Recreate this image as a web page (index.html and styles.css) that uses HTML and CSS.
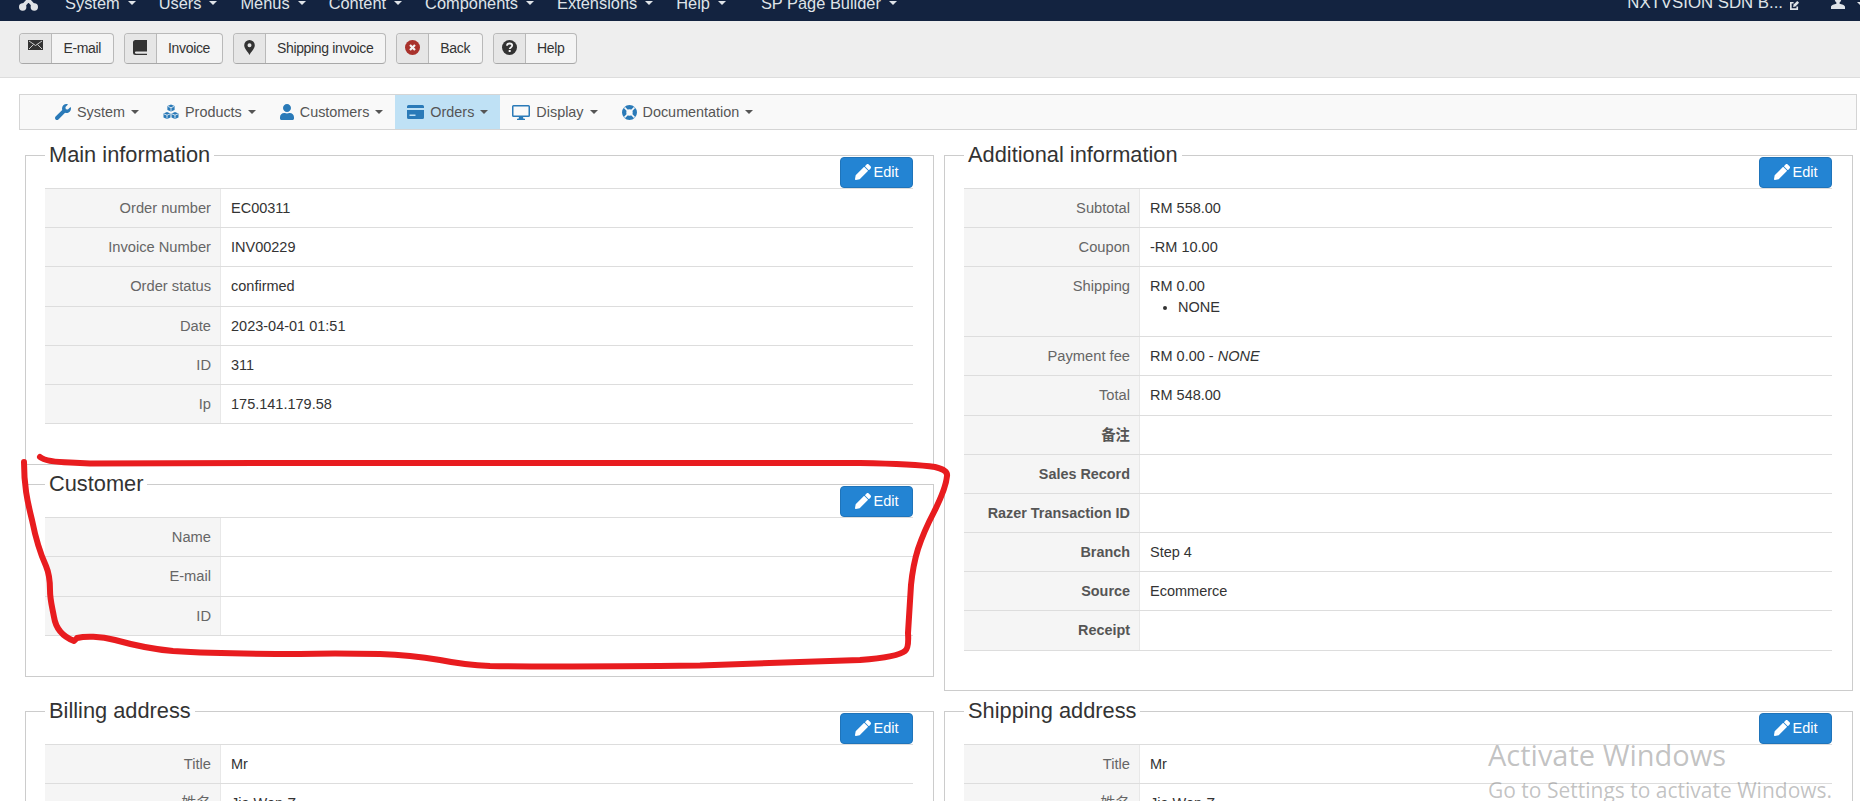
FILE: index.html
```html
<!DOCTYPE html>
<html lang="en">
<head>
<meta charset="utf-8">
<title>Order EC00311</title>
<link rel="stylesheet" href="styles.css">
</head>
<body>
<header class="topnav">
  <svg class="joomla" viewBox="0 0 19 21"><path d="M4 4 L15 16 M15 4 L4 16" stroke="#dfe2e6" stroke-width="3.600" stroke-linecap="round"/><circle cx="3.500" cy="3.500" r="3.200" fill="#dfe2e6"/><circle cx="15.500" cy="3.500" r="3.200" fill="#dfe2e6"/><circle cx="3.700" cy="17" r="3.700" fill="#dfe2e6"/><circle cx="15.300" cy="17" r="3.700" fill="#dfe2e6"/></svg>
  <nav class="topnav-list">
    <span class="topnav-item">System<i class="caret"></i></span>
    <span class="topnav-item">Users<i class="caret"></i></span>
    <span class="topnav-item">Menus<i class="caret"></i></span>
    <span class="topnav-item">Content<i class="caret"></i></span>
    <span class="topnav-item">Components<i class="caret"></i></span>
    <span class="topnav-item">Extensions<i class="caret"></i></span>
    <span class="topnav-item">Help<i class="caret"></i></span>
    <span class="topnav-item topnav-item-sp">SP Page Builder<i class="caret"></i></span>
  </nav>
  <div class="topnav-right">
    <span>NXTVSION SDN B...</span>
    <svg class="ext" viewBox="0 0 12 12"><path d="M9 7v3H2V3h3" fill="none" stroke="#dfe3e8" stroke-width="1.800"/><path d="M4.500 7.500 L5 5 L9 1 L11 3 L7 7 Z" fill="#dfe3e8"/></svg>
    <svg class="usr" viewBox="0 0 14 14"><path d="M7 0c2.200 0 3.400 1.600 3.400 3.800 0 1.600-.8 3-1.800 3.800v1.200c2 .6 5.400 1.200 5.400 3.200v2H0v-2c0-2 3.400-2.600 5.400-3.200V7.600C4.400 6.800 3.600 5.400 3.600 3.800 3.600 1.600 4.800 0 7 0z" fill="#dfe3e8"/></svg>
    <i class="caret caret-last"></i>
  </div>
</header>

<div class="toolbar">
  <a class="tbtn"><span class="tbtn-icon"><svg width="15" height="10" viewBox="0 0 15 10"><rect width="15" height="10" fill="#333"/><path d="M1 1 L7.500 5.500 L14 1 M1 9 L5.500 4.500 M14 9 L9.500 4.500" fill="none" stroke="#ddd" stroke-width=".9"/></svg></span><span class="tbtn-text">E-mail</span></a>
  <a class="tbtn"><span class="tbtn-icon"><svg width="14" height="15" viewBox="0 0 14 15"><path d="M2.500 0H14v11.500H3a1 1 0 0 0 0 2.200h11V15H2.500A2.500 2.500 0 0 1 0 12.500v-10A2.500 2.500 0 0 1 2.500 0z" fill="#333"/></svg></span><span class="tbtn-text">Invoice</span></a>
  <a class="tbtn"><span class="tbtn-icon"><svg width="11" height="15" viewBox="0 0 11 15"><path d="M5.500 0a5.300 5.300 0 0 1 5.300 5.300C10.800 8.500 7 12 5.500 15 4 12 .2 8.500.2 5.300A5.300 5.300 0 0 1 5.500 0zm0 3.300a2 2 0 1 0 0 4 2 2 0 0 0 0-4z" fill="#333" fill-rule="evenodd"/></svg></span><span class="tbtn-text">Shipping invoice</span></a>
  <a class="tbtn"><span class="tbtn-icon"><svg width="15" height="15" viewBox="0 0 15 15"><circle cx="7.500" cy="7.500" r="7.500" fill="#a9322c"/><path d="M5 5 L10 10 M10 5 L5 10" stroke="#f3f3f3" stroke-width="2.200"/></svg></span><span class="tbtn-text">Back</span></a>
  <a class="tbtn"><span class="tbtn-icon"><svg width="15" height="15" viewBox="0 0 15 15"><circle cx="7.500" cy="7.500" r="7.500" fill="#333"/><path d="M5 5.800C5 4.200 6.200 3.500 7.600 3.500S10.200 4.300 10.200 5.600C10.200 7.400 7.700 7.400 7.700 9" fill="none" stroke="#f3f3f3" stroke-width="1.800"/><rect x="6.700" y="10" width="2" height="2" fill="#f3f3f3"/></svg></span><span class="tbtn-text">Help</span></a>
</div>

<main class="page">
  <nav class="submenu">
    <a class="sub-item"><svg class="i16" viewBox="0 0 512 512"><path d="M507.730 109.100c-2.240-9.030-13.540-12.090-20.120-5.510l-74.360 74.360-67.880-11.310-11.310-67.880 74.360-74.360c6.620-6.620 3.430-17.900-5.660-20.160-47.380-11.740-99.550.91-136.580 37.930-39.640 39.640-50.550 97.100-34.050 147.200L18.740 402.760c-24.990 24.990-24.990 65.510 0 90.500 24.990 24.990 65.510 24.990 90.500 0l213.210-213.210c50.120 16.710 107.470 5.680 147.370-34.220 37.070-37.070 49.700-89.320 37.910-136.730z"/></svg>System<i class="caret caret-dark"></i></a>
    <a class="sub-item"><svg class="i16" viewBox="0 0 16 15"><path d="M8 0l3.600 1.500v4L8 7 4.400 5.500v-4zM4 7.500l3.500 1.500v4L4 14.500.5 13V9zM12 7.500L15.500 9v4L12 14.500 8.500 13V9z"/><path d="M4.800 1.900L8 3.200l3.200-1.300M8 3.200V6.500M.9 9.400L4 10.700l3.100-1.300M4 10.700V14M8.900 9.400L12 10.700l3.100-1.300M12 10.700V14" fill="none" stroke="#f9f9f9" stroke-width=".8"/></svg>Products<i class="caret caret-dark"></i></a>
    <a class="sub-item"><svg class="i14" viewBox="0 0 448 512"><path d="M224 256c70.700 0 128-57.300 128-128S294.700 0 224 0 96 57.300 96 128s57.300 128 128 128zm89.600 32h-16.700c-22.200 10.200-46.900 16-72.900 16s-50.600-5.800-72.900-16h-16.700C60.200 288 0 348.200 0 422.400V464c0 26.500 21.500 48 48 48h352c26.500 0 48-21.500 48-48v-41.600c0-74.200-60.200-134.400-134.400-134.400z"/></svg>Customers<i class="caret caret-dark"></i></a>
    <a class="sub-item sub-item-active"><svg class="i17" viewBox="0 0 17 14"><path d="M1.500 0h14A1.500 1.500 0 0 1 17 1.500V3H0V1.500A1.500 1.500 0 0 1 1.500 0zM0 5h17v7.500a1.500 1.500 0 0 1-1.500 1.500h-14A1.500 1.500 0 0 1 0 12.500zm2.500 4.500V11h6V9.500z" fill-rule="evenodd"/></svg>Orders<i class="caret caret-dark"></i></a>
    <a class="sub-item"><svg class="i18" viewBox="0 0 18 15"><path d="M1.500 0h15A1.500 1.500 0 0 1 18 1.500v9a1.500 1.500 0 0 1-1.500 1.500H11l.5 1.800h1.500V15H5v-1.200h1.500L7 12H1.500A1.500 1.500 0 0 1 0 10.500v-9A1.500 1.500 0 0 1 1.500 0zm0 1.500v9h15v-9z" fill-rule="evenodd"/></svg>Display<i class="caret caret-dark"></i></a>
    <a class="sub-item"><svg class="i15" viewBox="0 0 15 15"><path d="M7.500 0a7.500 7.500 0 1 1 0 15 7.500 7.500 0 0 1 0-15zm0 4.300a3.200 3.200 0 1 0 0 6.400 3.200 3.200 0 0 0 0-6.400z" fill-rule="evenodd"/><path d="M2.500 2.500L5.300 5.300M12.500 2.500L9.700 5.300M2.500 12.500L5.300 9.700M12.500 12.500L9.700 9.700" stroke="#f9f9f9" stroke-width="1.700"/></svg>Documentation<i class="caret caret-dark"></i></a>
  </nav>

  <div class="columns">
    <div class="stack">
      <fieldset class="box">
        <legend>Main information</legend>
        <div class="box-actions"><a class="edit"><svg class="pencil" viewBox="0 0 512 512"><path d="M497.900 142.100l-46.100 46.100c-4.700 4.700-12.300 4.700-17 0l-111-111c-4.700-4.700-4.700-12.300 0-17l46.100-46.100c18.700-18.700 49.100-18.700 67.900 0l60.100 60.100c18.800 18.700 18.800 49.100 0 67.900zM284.200 99.800L21.600 362.400.4 483.900c-2.900 16.400 11.400 30.600 27.800 27.800l121.500-21.300 262.600-262.600c4.700-4.700 4.700-12.300 0-17l-111-111c-4.800-4.700-12.400-4.700-17.100 0z"/></svg>Edit</a></div>
        <div class="rows">
          <div class="row"><div class="key">Order number</div><div class="val">EC00311</div></div>
          <div class="row"><div class="key">Invoice Number</div><div class="val">INV00229</div></div>
          <div class="row"><div class="key">Order status</div><div class="val">confirmed</div></div>
          <div class="row"><div class="key">Date</div><div class="val">2023-04-01 01:51</div></div>
          <div class="row"><div class="key">ID</div><div class="val">311</div></div>
          <div class="row"><div class="key">Ip</div><div class="val">175.141.179.58</div></div>
        </div>
      </fieldset>
      <fieldset class="box">
        <legend>Customer</legend>
        <div class="box-actions"><a class="edit"><svg class="pencil" viewBox="0 0 512 512"><path d="M497.900 142.100l-46.100 46.100c-4.700 4.700-12.300 4.700-17 0l-111-111c-4.700-4.700-4.700-12.300 0-17l46.100-46.100c18.700-18.700 49.100-18.700 67.900 0l60.100 60.100c18.800 18.700 18.800 49.100 0 67.900zM284.200 99.800L21.600 362.400.4 483.900c-2.900 16.400 11.400 30.600 27.800 27.800l121.500-21.300 262.600-262.600c4.700-4.700 4.700-12.300 0-17l-111-111c-4.800-4.700-12.400-4.700-17.100 0z"/></svg>Edit</a></div>
        <div class="rows">
          <div class="row"><div class="key">Name</div><div class="val"></div></div>
          <div class="row"><div class="key">E-mail</div><div class="val"></div></div>
          <div class="row"><div class="key">ID</div><div class="val"></div></div>
        </div>
      </fieldset>
    </div>

    <fieldset class="box box-tall">
      <legend>Additional information</legend>
      <div class="box-actions"><a class="edit"><svg class="pencil" viewBox="0 0 512 512"><path d="M497.900 142.100l-46.100 46.100c-4.700 4.700-12.300 4.700-17 0l-111-111c-4.700-4.700-4.700-12.300 0-17l46.100-46.100c18.700-18.700 49.100-18.700 67.900 0l60.100 60.100c18.800 18.700 18.800 49.100 0 67.900zM284.200 99.800L21.600 362.400.4 483.900c-2.900 16.400 11.400 30.600 27.800 27.800l121.500-21.300 262.600-262.600c4.700-4.700 4.700-12.300 0-17l-111-111c-4.800-4.700-12.400-4.700-17.100 0z"/></svg>Edit</a></div>
      <div class="rows">
        <div class="row"><div class="key">Subtotal</div><div class="val">RM 558.00</div></div>
        <div class="row"><div class="key">Coupon</div><div class="val">-RM 10.00</div></div>
        <div class="row"><div class="key">Shipping</div><div class="val">RM 0.00<ul class="ship-list"><li>NONE</li></ul></div></div>
        <div class="row"><div class="key">Payment fee</div><div class="val">RM 0.00 - <em>NONE</em></div></div>
        <div class="row"><div class="key">Total</div><div class="val">RM 548.00</div></div>
        <div class="row"><div class="key key-b">备注</div><div class="val"></div></div>
        <div class="row"><div class="key key-b">Sales Record</div><div class="val"></div></div>
        <div class="row"><div class="key key-b">Razer Transaction ID</div><div class="val"></div></div>
        <div class="row"><div class="key key-b">Branch</div><div class="val">Step 4</div></div>
        <div class="row"><div class="key key-b">Source</div><div class="val">Ecommerce</div></div>
        <div class="row"><div class="key key-b">Receipt</div><div class="val"></div></div>
      </div>
    </fieldset>

    <fieldset class="box">
      <legend>Billing address</legend>
      <div class="box-actions"><a class="edit"><svg class="pencil" viewBox="0 0 512 512"><path d="M497.900 142.100l-46.100 46.100c-4.700 4.700-12.300 4.700-17 0l-111-111c-4.700-4.700-4.700-12.300 0-17l46.100-46.100c18.700-18.700 49.100-18.700 67.900 0l60.100 60.100c18.800 18.700 18.800 49.100 0 67.900zM284.200 99.800L21.600 362.400.4 483.900c-2.900 16.400 11.400 30.600 27.800 27.800l121.500-21.300 262.600-262.600c4.700-4.700 4.700-12.300 0-17l-111-111c-4.800-4.700-12.400-4.700-17.100 0z"/></svg>Edit</a></div>
      <div class="rows">
        <div class="row"><div class="key">Title</div><div class="val">Mr</div></div>
        <div class="row"><div class="key">姓名</div><div class="val">Jia Wen Z</div></div>
      </div>
    </fieldset>

    <fieldset class="box">
      <legend>Shipping address</legend>
      <div class="box-actions"><a class="edit"><svg class="pencil" viewBox="0 0 512 512"><path d="M497.900 142.100l-46.100 46.100c-4.700 4.700-12.300 4.700-17 0l-111-111c-4.700-4.700-4.700-12.300 0-17l46.100-46.100c18.700-18.700 49.100-18.700 67.900 0l60.100 60.100c18.800 18.700 18.800 49.100 0 67.900zM284.200 99.800L21.600 362.400.4 483.900c-2.900 16.400 11.400 30.600 27.800 27.800l121.500-21.300 262.600-262.600c4.700-4.700 4.700-12.300 0-17l-111-111c-4.800-4.700-12.400-4.700-17.100 0z"/></svg>Edit</a></div>
      <div class="rows">
        <div class="row"><div class="key">Title</div><div class="val">Mr</div></div>
        <div class="row"><div class="key">姓名</div><div class="val">Jia Wen Z</div></div>
      </div>
    </fieldset>
  </div>
</main>

<svg class="annotation" viewBox="0 0 1860 801" width="1860" height="801"><path d="M40 457Q46 462 70 462.500L90 463.500L300 463L860 463Q915 464 935 467Q948 470 947 476Q946 488 934 512Q924 531 918 549Q913 565 911 585L908 633Q909 648 905 651Q898 657 860 660L700 665.500Q560 667 490 666Q465 665 440 660Q410 655 380 654Q330 653 300 654Q220 654 173 651C150 649 133 645 115 640C100 636 85 636 77 638L74 641C64 637 56 630 54 617C52 606 50 600 50 590C50 578 49 573 46 566C40 553 36 540 32 520C27 500 24 485 24 462"/></svg>

<aside class="watermark">
  <div class="wm-title">Activate Windows</div>
  <div class="wm-sub">Go to Settings to activate Windows.</div>
</aside>
</body>
</html>
```
FILE: styles.css
```css
* { box-sizing: border-box; }
html, body { margin: 0; height: 801px; overflow: hidden; background: #fff; }
body { font-family: "Liberation Sans", Arial, "Noto Sans CJK SC", sans-serif; font-size: 14px; color: #333; position: relative; }

/* top bar */
.topnav { height: 21px; background: #132340; color: #dfe3e8; display: flex; align-items: flex-start; overflow: hidden; padding-left: 19px; position: relative; }
.joomla { width: 19px; height: 21px; margin-top: -10px; flex: none; }
.topnav-list { display: flex; margin: -7px 0 0 27px; font-size: 16.4px; line-height: 20px; }
.topnav-item { display: flex; align-items: center; margin-right: 23px; white-space: nowrap; }
.topnav-item-sp { margin-left: 12px; }
.caret { display: inline-block; width: 0; height: 0; border-style: solid; border-width: 4px 4px 0; border-color: #dfe3e8 transparent transparent; margin-left: 8px; flex: none; }
.caret-dark { border-color: #555 transparent transparent; margin-left: 6px; }
.topnav-right { margin-left: auto; display: flex; align-items: flex-start; font-size: 16.8px; line-height: 20px; margin-top: -7px; white-space: nowrap; }
.ext { width: 11px; height: 11px; margin: 7px 0 0 6px; }
.usr { width: 14px; height: 14px; margin: 2px 0 0 31px; }
.caret-last { margin: 9px -5px 0 12px; }

/* toolbar */
.toolbar { height: 57px; background: #eee; border-bottom: 1px solid #ddd; padding: 12px 0 0 19px; display: flex; gap: 10px; align-items: flex-start; }
.tbtn { display: flex; height: 31px; border: 1px solid #b9b9b9; border-bottom-color: #a8a8a8; border-radius: 4px; background: #f4f4f4; font-size: 14px; letter-spacing: -.35px; line-height: 29px; color: #333; overflow: hidden; }
.tbtn-icon { width: 32px; background: #e6e6e6; border-right: 1px solid #b9b9b9; display: flex; align-items: flex-start; justify-content: center; padding-top: 6px; }
.tbtn-text { padding: 0 11.500px; white-space: nowrap; }

/* page */
.page { padding: 16px 3px 0 19px; }
.submenu { height: 36px; border: 1px solid #d5d5d5; background: #f9f9f9; display: flex; padding-left: 23px; color: #555; font-size: 14.4px; }
.sub-item { display: flex; align-items: center; padding: 0 12px; white-space: nowrap; }
.sub-item svg { fill: #2a7ab8; margin-right: 6px; flex: none; }
.sub-item-active { background: #bfe1f5; }
.i14 { width: 14px; height: 16px; }
.i15 { width: 15px; height: 15px; }
.i16 { width: 16px; height: 16px; }
.i17 { width: 17px; height: 14px; }
.i18 { width: 18px; height: 15px; }

.columns { display: grid; grid-template-columns: 909px 909px; column-gap: 10px; row-gap: 20px; margin: 25px 0 0 6px; align-items: start; }
.stack { display: flex; flex-direction: column; gap: 19px; }

.box { margin: 0; min-width: 0; border: 1px solid #ccc; padding: 1px 20px 40px 19px; }
.box-tall { padding-bottom: 39.200px; }
.box legend { padding: 0 4px; height: 1px; line-height: 1px; font-size: 21.800px; color: #333; white-space: nowrap; transform: translateY(-1px); }
.box-actions { display: flex; justify-content: flex-end; }
.edit { display: flex; align-items: center; justify-content: center; gap: 3px; width: 73px; height: 31px; padding-bottom: 1px; background: #2384d3; border: 1px solid #1f74ba; border-radius: 4px; color: #fff; font-size: 14.500px; }
.pencil { width: 16px; height: 16px; fill: #fff; }

.rows { border-bottom: 1px solid #ddd; }
.row { display: grid; grid-template-columns: 176px 1fr; border-top: 1px solid #ddd; min-height: 39.200px; line-height: 20px; }
.key { background: #f5f5f5; border-right: 1px solid #e8e8e8; text-align: right; padding: 9px 9px 9px 0; color: #666; font-size: 14.700px; white-space: nowrap; }
.key-b { font-weight: bold; color: #555; font-size: 14.400px; }
.val { padding: 9px 10px; font-size: 14.500px; color: #333; }
.ship-list { margin: 1px 0 9.800px; padding-left: 28px; line-height: 20px; }

/* annotation + watermark overlays */
.annotation { position: absolute; left: 0; top: 0; pointer-events: none; }
.annotation path { fill: none; stroke: #e81c1f; stroke-width: 6; stroke-linecap: round; stroke-linejoin: round; }
.watermark { position: absolute; left: 1488px; top: 737px; color: rgba(120,120,120,.45); font-family: "Open Sans", sans-serif; white-space: nowrap; }
.wm-title { font-size: 29px; line-height: 36px; }
.wm-sub { font-size: 21px; line-height: 34px; }
```
